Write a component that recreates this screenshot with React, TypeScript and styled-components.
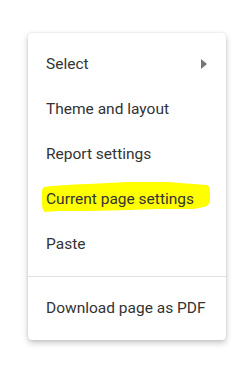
import React from 'react';
import styled, { createGlobalStyle } from 'styled-components';

const GlobalStyle = createGlobalStyle`
  html, body {
    margin: 0;
    padding: 0;
    background: #ffffff;
  }
`;

const Page = styled.div`
  width: 248px;
  height: 367px;
  padding: 33px 0 0 28px;
  box-sizing: border-box;
`;

const Menu = styled.div`
  width: 198px;
  padding: 8px 0 10px;
  background: #ffffff;
  border-radius: 4px;
  box-shadow: 0 3px 6px rgba(0, 0, 0, 0.22), 0 0 3px rgba(0, 0, 0, 0.1);
  font-family: Roboto, 'Noto Sans', sans-serif;
  font-size: 15.5px;
  color: #333333;
`;

const Item = styled.div`
  position: relative;
  height: 45px;
  display: flex;
  align-items: center;
  justify-content: space-between;
  padding: 0 18px;
`;

const Label = styled.span`
  position: relative;
  z-index: 1;
  white-space: nowrap;
`;

const Arrow = styled.span`
  width: 0;
  height: 0;
  margin-right: 1px;
  border-top: 5px solid transparent;
  border-bottom: 5px solid transparent;
  border-left: 6px solid #757575;
`;

const Highlight = styled.svg`
  position: absolute;
  left: 0;
  top: 0;
  width: 198px;
  height: 45px;
  z-index: 0;
`;

const Divider = styled.div`
  height: 1px;
  margin: 10px 0 8px;
  background: #e0e0e0;
`;

const items = ['Theme and layout', 'Report settings'];

export default function App() {
  return (
    <>
      <GlobalStyle />
      <Page>
        <Menu>
          <Item>
            <Label>Select</Label>
            <Arrow />
          </Item>
          {items.map((t) => (
            <Item key={t}>
              <Label>{t}</Label>
            </Item>
          ))}
          <Item>
            <Highlight viewBox="0 0 198 45">
              <path
                d="M16 11 Q30 9 60 8 L100 6 L140 6 L165 8 L179 9 Q182 10 182 16 L182 25 Q181 30 176 31 L165 33 L130 33 L100 34 L60 35 L30 35 L17 36 Q14 34 14 28 L14 16 Q14 12 16 11 Z"
                fill="#ffff00"
              />
            </Highlight>
            <Label>Current page settings</Label>
          </Item>
          <Item>
            <Label>Paste</Label>
          </Item>
          <Divider />
          <Item>
            <Label>Download page as PDF</Label>
          </Item>
        </Menu>
      </Page>
    </>
  );
}
